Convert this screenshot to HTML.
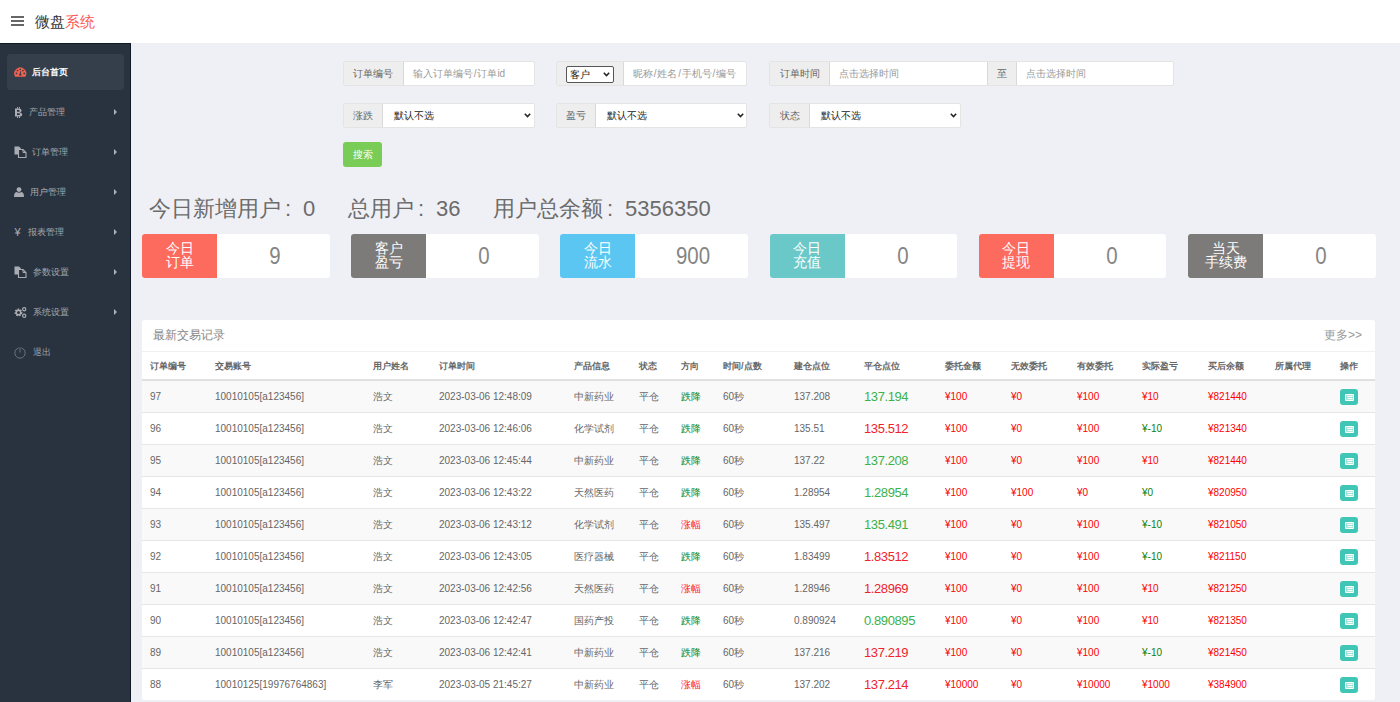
<!DOCTYPE html>
<html><head><meta charset="utf-8">
<style>
*{box-sizing:border-box;margin:0;padding:0}
html,body{width:1400px;height:702px;overflow:hidden}
body{font-family:"Liberation Sans",sans-serif;background:#eff0f5;position:relative;color:#666}
.hdr{position:absolute;left:0;top:0;width:1400px;height:43px;background:#fff}
.ham{position:absolute;left:11px;top:16px;width:12px;height:10px}
.ham i{position:absolute;left:0;width:12.5px;height:2px;background:#666}
.title{position:absolute;left:35px;top:11.5px;font-size:15px;line-height:20px;color:#333;white-space:nowrap}
.title span{color:#fb5858}
.side{position:absolute;left:0;top:43px;width:131px;height:659px;background:#29333f;border-top:1px solid #111a27;border-right:1px solid #111a27}
.si{position:absolute;left:7px;width:117px;height:36px;border-radius:3px}
.si.act{background:#353f4b}
.st{position:absolute;line-height:36px;font-size:9px;color:#a3a8ae;white-space:nowrap}
.st.w{color:#fff;font-weight:bold}
.ar{position:absolute;left:114px;width:0;height:0;border-left:3px solid #aeb2b7;border-top:3px solid transparent;border-bottom:3px solid transparent}
svg.ic{position:absolute}
.nav.act{background:#353f4b}
.nav .t{position:absolute;top:0;line-height:36px;font-size:9px;color:#a3a8ae;white-space:nowrap}
.nav.act .t{color:#fff}
.nav .ar{position:absolute;left:107px;top:15px;width:0;height:0;border-left:3px solid #aeb2b7;border-top:3px solid transparent;border-bottom:3px solid transparent}
.nav svg{position:absolute}
.main{position:absolute;left:131px;top:43px;width:1269px;height:659px}
.ig{position:absolute;height:25px;background:#fff;border:1px solid #e4e4e4;border-radius:2px;overflow:hidden}
.ig .ad{position:absolute;left:0;top:0;bottom:0;background:#eee;border-right:1px solid #d9d9d9;color:#666;font-size:10px;line-height:23px;text-align:center;white-space:nowrap}
.ig .ph{position:absolute;top:0;line-height:23px;font-size:10px;color:#9a9a9a;white-space:nowrap}
.ig .sv{position:absolute;top:0;line-height:24px;font-size:10px;color:#222;white-space:nowrap}
.chev{position:absolute;top:9px;width:7px;height:5px}
.sl{font-style:normal;padding:0 0.8px}
.isel{position:absolute;border:1px solid #555;border-radius:2px;background:#fff;font-size:10px;line-height:15px;padding-left:3px;color:#111}
.stath span{position:absolute;top:194px;font-size:22px;line-height:30px;color:#6b6b6b;white-space:nowrap}
.co{font-style:normal;display:inline-block;width:22px;padding-left:4px}
.card{position:absolute;top:234px;width:187.5px;height:44px;background:#fff;border-radius:3px;overflow:hidden}
.cl{position:absolute;left:0;top:0;width:75px;height:44px;color:#fff;font-size:13.5px;line-height:14px;text-align:center;padding-top:8px}
.cv{position:absolute;left:77px;top:0;width:112px;height:44px;text-align:center;font-size:23.5px;line-height:44px;color:#858585;transform:scaleX(0.87)}
.panel{position:absolute;left:142px;top:320px;width:1233px;height:380px;background:#fff;border-radius:3px}
.ptitle{position:absolute;left:153px;top:326px;font-size:12px;line-height:18px;color:#888;white-space:nowrap}
.pmore{position:absolute;left:1324px;top:326px;font-size:12px;line-height:18px;color:#999;white-space:nowrap}
.tdiv{position:absolute;left:142px;top:351px;width:1233px;height:1px;background:#eef0f3}
.th{position:absolute;top:358px;font-size:9.3px;line-height:16px;font-weight:bold;color:#666;white-space:nowrap}
.thb{position:absolute;left:142px;top:379px;width:1233px;height:2px;background:#e0e0e0}
.tr{position:absolute;left:142px;width:1233px;height:32px;border-bottom:1px solid #e6e6e6;background:#fff}
.tr.s{background:#f9f9f9}
.tr.last{height:31px;border-bottom:none;border-radius:0 0 3px 3px}
.td{position:absolute;top:0;line-height:31px;font-size:10px;color:#666;white-space:nowrap}
.dg{color:#0d820d}.ur{color:#ff2020}.rd{color:#f00}
.big{font-size:13px;letter-spacing:-0.4px}.bg{color:#3db14b}.br{color:#f0232c}
.op{position:absolute;left:0;top:8px;width:18px;height:16px;background:#3fc6b6;border-radius:3px}
.op svg{position:absolute;left:4.5px;top:4.5px}
.btn{position:absolute;left:343px;top:142px;width:39px;height:25px;background:#79cc55;border-radius:3px;color:#fff;font-size:10px;line-height:25px;text-align:center}
</style></head><body>
<div class="hdr">
  <div class="ham"><i style="top:0"></i><i style="top:4px"></i><i style="top:8px"></i></div>
  <div class="title">微盘<span>系统</span></div>
</div>
<div class="side"></div>
<div class="si act" style="top:54px"></div>
<svg class="ic" style="left:14px;top:67px" width="13" height="11" viewBox="0 0 13 11"><path d="M1.21 9.75 A6 6 0 1 1 11.29 9.75 Z" fill="#f0604f"/><g fill="#353f4b"><circle cx="6.25" cy="2.3" r="0.85"/><circle cx="3.5" cy="3.5" r="0.85"/><circle cx="9" cy="3.5" r="0.85"/><circle cx="2.5" cy="6.4" r="0.85"/><circle cx="10.25" cy="6.4" r="0.85"/><circle cx="6.25" cy="7.6" r="1.2"/></g><path d="M6.25 7.6 L6.7 4.2" stroke="#353f4b" stroke-width="0.9"/></svg>
<div class="st w" style="left:32px;top:54px">后台首页</div>
<div class="si" style="top:94px"></div>
<svg class="ic" style="left:14px;top:107px" width="9" height="11" viewBox="0 0 9 11"><path d="M1 1.5 H5 Q7.6 1.5 7.6 3.6 Q7.6 5.2 5.6 5.4 Q8.2 5.6 8.2 7.4 Q8.2 9.5 5.4 9.5 H1 Z M3 3 V4.8 H4.8 Q5.6 4.8 5.6 3.9 Q5.6 3 4.8 3 Z M3 6.2 V8 H5 Q6 8 6 7.1 Q6 6.2 5 6.2 Z" fill="#a9adb3" fill-rule="evenodd"/><rect x="3" y="0" width="1" height="1.6" fill="#a9adb3"/><rect x="5" y="0" width="1" height="1.6" fill="#a9adb3"/><rect x="3" y="9.4" width="1" height="1.6" fill="#a9adb3"/><rect x="5" y="9.4" width="1" height="1.6" fill="#a9adb3"/></svg>
<div class="st" style="left:29px;top:94px">产品管理</div>
<div class="ar" style="top:109px"></div>
<div class="si" style="top:134px"></div>
<svg class="ic" style="left:14px;top:146px" width="13" height="12" viewBox="0 0 13 12"><path d="M0.5 0.5 H5 L7 2.5 V8.5 H0.5 Z" fill="#a9adb3"/><path d="M4.5 3.5 H9 L12 6.5 V11.5 H4.5 Z" fill="#29333f" stroke="#a9adb3" stroke-width="1.1"/><path d="M9 3.5 V6.5 H12" fill="none" stroke="#a9adb3" stroke-width="1"/></svg>
<div class="st" style="left:32px;top:134px">订单管理</div>
<div class="ar" style="top:149px"></div>
<div class="si" style="top:174px"></div>
<svg class="ic" style="left:14px;top:187px" width="10" height="10" viewBox="0 0 10 10"><circle cx="5" cy="2.6" r="2.4" fill="#a9adb3"/><path d="M0 10 Q0 5.2 2.6 5 Q5 6.4 7.4 5 Q10 5.2 10 10 Z" fill="#a9adb3"/></svg>
<div class="st" style="left:30px;top:174px">用户管理</div>
<div class="ar" style="top:189px"></div>
<div class="si" style="top:214px"></div>
<div style="position:absolute;left:14.5px;top:226px;font-size:11px;line-height:12px;color:#a9adb3">¥</div>
<div class="st" style="left:28px;top:214px">报表管理</div>
<div class="ar" style="top:229px"></div>
<div class="si" style="top:254px"></div>
<svg class="ic" style="left:14px;top:266px" width="13" height="12" viewBox="0 0 13 12"><path d="M0.5 0.5 H5 L7 2.5 V8.5 H0.5 Z" fill="#a9adb3"/><path d="M4.5 3.5 H9 L12 6.5 V11.5 H4.5 Z" fill="#29333f" stroke="#a9adb3" stroke-width="1.1"/><path d="M9 3.5 V6.5 H12" fill="none" stroke="#a9adb3" stroke-width="1"/></svg>
<div class="st" style="left:33px;top:254px">参数设置</div>
<div class="ar" style="top:269px"></div>
<div class="si" style="top:294px"></div>
<svg class="ic" style="left:14px;top:307px" width="13" height="11" viewBox="0 0 13 11"><circle cx="4.5" cy="5.5" r="2.8" fill="none" stroke="#a9adb3" stroke-width="2.2" stroke-dasharray="1.5 0.9"/><circle cx="4.5" cy="5.5" r="2.2" fill="none" stroke="#a9adb3" stroke-width="1.4"/><circle cx="10.2" cy="2.2" r="1.6" fill="none" stroke="#a9adb3" stroke-width="1.2"/><circle cx="10.2" cy="8.8" r="1.6" fill="none" stroke="#a9adb3" stroke-width="1.2"/></svg>
<div class="st" style="left:33px;top:294px">系统设置</div>
<div class="ar" style="top:309px"></div>
<div class="si" style="top:334px"></div>
<svg class="ic" style="left:14px;top:347px" width="12" height="12" viewBox="0 0 12 12"><path d="M4.7 0.95 A5.2 5.2 0 1 0 7.3 0.95" fill="none" stroke="#7c848c" stroke-width="0.8"/><path d="M6 0.3 V5.6" stroke="#7c848c" stroke-width="0.8"/></svg>
<div class="st" style="left:33px;top:334px">退出</div>

<div class="ig" style="left:343px;top:61px;width:192px">
 <div class="ad" style="width:60px;padding-right:2px">订单编号</div>
 <div class="ph" style="left:69px">输入订单编号<i class="sl">/</i>订单id</div>
</div>
<div class="ig" style="left:556px;top:61px;width:191px">
 <div class="ad" style="width:67px"></div>
 <div class="ph" style="left:76px">昵称<i class="sl">/</i>姓名<i class="sl">/</i>手机号<i class="sl">/</i>编号</div>
</div>
<div class="isel" style="left:566px;top:66px;width:48px;height:17px">客户</div>
<svg class="chev" style="left:603px;top:72px" width="7" height="5" viewBox="0 0 7 5"><path d="M0.8 0.8 L3.5 3.6 L6.2 0.8" fill="none" stroke="#222" stroke-width="1.5"/></svg>
<div class="ig" style="left:769px;top:61px;width:405px">
 <div class="ad" style="width:60px">订单时间</div>
 <div class="ph" style="left:69px">点击选择时间</div>
 <div class="ad" style="left:217px;width:30px;border-left:1px solid #d9d9d9">至</div>
 <div class="ph" style="left:256px">点击选择时间</div>
</div>
<div class="ig" style="left:343px;top:103px;width:192px">
 <div class="ad" style="width:39px">涨跌</div>
 <div class="sv" style="left:50px">默认不选</div>
</div>
<svg class="chev" style="left:524px;top:113px" width="7" height="5" viewBox="0 0 7 5"><path d="M0.8 0.8 L3.5 3.6 L6.2 0.8" fill="none" stroke="#222" stroke-width="1.5"/></svg>
<div class="ig" style="left:556px;top:103px;width:191px">
 <div class="ad" style="width:39px;padding-right:1px">盈亏</div>
 <div class="sv" style="left:50px">默认不选</div>
</div>
<svg class="chev" style="left:737px;top:113px" width="7" height="5" viewBox="0 0 7 5"><path d="M0.8 0.8 L3.5 3.6 L6.2 0.8" fill="none" stroke="#222" stroke-width="1.5"/></svg>
<div class="ig" style="left:769px;top:103px;width:192px">
 <div class="ad" style="width:40px">状态</div>
 <div class="sv" style="left:51px">默认不选</div>
</div>
<svg class="chev" style="left:950px;top:113px" width="7" height="5" viewBox="0 0 7 5"><path d="M0.8 0.8 L3.5 3.6 L6.2 0.8" fill="none" stroke="#222" stroke-width="1.5"/></svg>
<div class="btn">搜索</div>
<div class="stath"><span style="left:149px">今日新增用户<i class="co">:</i>0</span><span style="left:348px">总用户<i class="co">:</i>36</span><span style="left:493px">用户总余额<i class="co">:</i>5356350</span></div>
<div class="card" style="left:142.0px"><div class="cl" style="background:#fd6a5e">今日<br>订单</div><div class="cv">9</div></div>
<div class="card" style="left:351.2px"><div class="cl" style="background:#7d7b7a">客户<br>盈亏</div><div class="cv">0</div></div>
<div class="card" style="left:560.4px"><div class="cl" style="background:#5bc6f2">今日<br>流水</div><div class="cv">900</div></div>
<div class="card" style="left:769.6px"><div class="cl" style="background:#6ac9c8">今日<br>充值</div><div class="cv">0</div></div>
<div class="card" style="left:978.8px"><div class="cl" style="background:#fd6a5e">今日<br>提现</div><div class="cv">0</div></div>
<div class="card" style="left:1188.0px"><div class="cl" style="background:#7d7b7a">当天<br>手续费</div><div class="cv">0</div></div>

<div class="panel"></div>
<div class="ptitle">最新交易记录</div>
<div class="pmore">更多&gt;&gt;</div>
<div class="tdiv"></div>
<div class="th" style="left:150px">订单编号</div>
<div class="th" style="left:215px">交易账号</div>
<div class="th" style="left:373px">用户姓名</div>
<div class="th" style="left:439px">订单时间</div>
<div class="th" style="left:574px">产品信息</div>
<div class="th" style="left:639px">状态</div>
<div class="th" style="left:681px">方向</div>
<div class="th" style="left:723px">时间/点数</div>
<div class="th" style="left:794px">建仓点位</div>
<div class="th" style="left:864px">平仓点位</div>
<div class="th" style="left:945px">委托金额</div>
<div class="th" style="left:1011px">无效委托</div>
<div class="th" style="left:1077px">有效委托</div>
<div class="th" style="left:1142px">实际盈亏</div>
<div class="th" style="left:1208px">买后余额</div>
<div class="th" style="left:1275px">所属代理</div>
<div class="th" style="left:1340px">操作</div>
<div class="thb"></div>
<div class="tr s" style="top:381px">
 <div class="td" style="left:8px">97</div>
 <div class="td" style="left:73px">10010105[a123456]</div>
 <div class="td" style="left:231px">浩文</div>
 <div class="td" style="left:297px">2023-03-06 12:48:09</div>
 <div class="td" style="left:432px">中新药业</div>
 <div class="td" style="left:497px">平仓</div>
 <div class="td" style="left:539px"><span class="dg">跌降</span></div>
 <div class="td" style="left:581px">60秒</div>
 <div class="td" style="left:652px">137.208</div>
 <div class="td" style="left:722px"><span class="big bg">137.194</span></div>
 <div class="td" style="left:803px"><span class="rd">¥100</span></div>
 <div class="td" style="left:869px"><span class="rd">¥0</span></div>
 <div class="td" style="left:935px"><span class="rd">¥100</span></div>
 <div class="td" style="left:1000px"><span class="rd">¥10</span></div>
 <div class="td" style="left:1066px"><span class="rd">¥821440</span></div>
 <div class="td" style="left:1198px"><div class="op"><svg width="9" height="7" viewBox="0 0 9 7"><rect x="0" y="0" width="9" height="7" rx="1" fill="#fff"/><rect x="1" y="1.2" width="7" height="4.6" fill="#9fe0d8"/><rect x="2.5" y="2" width="5" height="1" fill="#fff"/><rect x="2.5" y="4" width="5" height="1" fill="#fff"/></svg></div></div>
</div>
<div class="tr" style="top:413px">
 <div class="td" style="left:8px">96</div>
 <div class="td" style="left:73px">10010105[a123456]</div>
 <div class="td" style="left:231px">浩文</div>
 <div class="td" style="left:297px">2023-03-06 12:46:06</div>
 <div class="td" style="left:432px">化学试剂</div>
 <div class="td" style="left:497px">平仓</div>
 <div class="td" style="left:539px"><span class="dg">跌降</span></div>
 <div class="td" style="left:581px">60秒</div>
 <div class="td" style="left:652px">135.51</div>
 <div class="td" style="left:722px"><span class="big br">135.512</span></div>
 <div class="td" style="left:803px"><span class="rd">¥100</span></div>
 <div class="td" style="left:869px"><span class="rd">¥0</span></div>
 <div class="td" style="left:935px"><span class="rd">¥100</span></div>
 <div class="td" style="left:1000px"><span class="dg">¥-10</span></div>
 <div class="td" style="left:1066px"><span class="rd">¥821340</span></div>
 <div class="td" style="left:1198px"><div class="op"><svg width="9" height="7" viewBox="0 0 9 7"><rect x="0" y="0" width="9" height="7" rx="1" fill="#fff"/><rect x="1" y="1.2" width="7" height="4.6" fill="#9fe0d8"/><rect x="2.5" y="2" width="5" height="1" fill="#fff"/><rect x="2.5" y="4" width="5" height="1" fill="#fff"/></svg></div></div>
</div>
<div class="tr s" style="top:445px">
 <div class="td" style="left:8px">95</div>
 <div class="td" style="left:73px">10010105[a123456]</div>
 <div class="td" style="left:231px">浩文</div>
 <div class="td" style="left:297px">2023-03-06 12:45:44</div>
 <div class="td" style="left:432px">中新药业</div>
 <div class="td" style="left:497px">平仓</div>
 <div class="td" style="left:539px"><span class="dg">跌降</span></div>
 <div class="td" style="left:581px">60秒</div>
 <div class="td" style="left:652px">137.22</div>
 <div class="td" style="left:722px"><span class="big bg">137.208</span></div>
 <div class="td" style="left:803px"><span class="rd">¥100</span></div>
 <div class="td" style="left:869px"><span class="rd">¥0</span></div>
 <div class="td" style="left:935px"><span class="rd">¥100</span></div>
 <div class="td" style="left:1000px"><span class="rd">¥10</span></div>
 <div class="td" style="left:1066px"><span class="rd">¥821440</span></div>
 <div class="td" style="left:1198px"><div class="op"><svg width="9" height="7" viewBox="0 0 9 7"><rect x="0" y="0" width="9" height="7" rx="1" fill="#fff"/><rect x="1" y="1.2" width="7" height="4.6" fill="#9fe0d8"/><rect x="2.5" y="2" width="5" height="1" fill="#fff"/><rect x="2.5" y="4" width="5" height="1" fill="#fff"/></svg></div></div>
</div>
<div class="tr" style="top:477px">
 <div class="td" style="left:8px">94</div>
 <div class="td" style="left:73px">10010105[a123456]</div>
 <div class="td" style="left:231px">浩文</div>
 <div class="td" style="left:297px">2023-03-06 12:43:22</div>
 <div class="td" style="left:432px">天然医药</div>
 <div class="td" style="left:497px">平仓</div>
 <div class="td" style="left:539px"><span class="dg">跌降</span></div>
 <div class="td" style="left:581px">60秒</div>
 <div class="td" style="left:652px">1.28954</div>
 <div class="td" style="left:722px"><span class="big bg">1.28954</span></div>
 <div class="td" style="left:803px"><span class="rd">¥100</span></div>
 <div class="td" style="left:869px"><span class="rd">¥100</span></div>
 <div class="td" style="left:935px"><span class="rd">¥0</span></div>
 <div class="td" style="left:1000px"><span class="dg">¥0</span></div>
 <div class="td" style="left:1066px"><span class="rd">¥820950</span></div>
 <div class="td" style="left:1198px"><div class="op"><svg width="9" height="7" viewBox="0 0 9 7"><rect x="0" y="0" width="9" height="7" rx="1" fill="#fff"/><rect x="1" y="1.2" width="7" height="4.6" fill="#9fe0d8"/><rect x="2.5" y="2" width="5" height="1" fill="#fff"/><rect x="2.5" y="4" width="5" height="1" fill="#fff"/></svg></div></div>
</div>
<div class="tr s" style="top:509px">
 <div class="td" style="left:8px">93</div>
 <div class="td" style="left:73px">10010105[a123456]</div>
 <div class="td" style="left:231px">浩文</div>
 <div class="td" style="left:297px">2023-03-06 12:43:12</div>
 <div class="td" style="left:432px">化学试剂</div>
 <div class="td" style="left:497px">平仓</div>
 <div class="td" style="left:539px"><span class="ur">涨幅</span></div>
 <div class="td" style="left:581px">60秒</div>
 <div class="td" style="left:652px">135.497</div>
 <div class="td" style="left:722px"><span class="big bg">135.491</span></div>
 <div class="td" style="left:803px"><span class="rd">¥100</span></div>
 <div class="td" style="left:869px"><span class="rd">¥0</span></div>
 <div class="td" style="left:935px"><span class="rd">¥100</span></div>
 <div class="td" style="left:1000px"><span class="dg">¥-10</span></div>
 <div class="td" style="left:1066px"><span class="rd">¥821050</span></div>
 <div class="td" style="left:1198px"><div class="op"><svg width="9" height="7" viewBox="0 0 9 7"><rect x="0" y="0" width="9" height="7" rx="1" fill="#fff"/><rect x="1" y="1.2" width="7" height="4.6" fill="#9fe0d8"/><rect x="2.5" y="2" width="5" height="1" fill="#fff"/><rect x="2.5" y="4" width="5" height="1" fill="#fff"/></svg></div></div>
</div>
<div class="tr" style="top:541px">
 <div class="td" style="left:8px">92</div>
 <div class="td" style="left:73px">10010105[a123456]</div>
 <div class="td" style="left:231px">浩文</div>
 <div class="td" style="left:297px">2023-03-06 12:43:05</div>
 <div class="td" style="left:432px">医疗器械</div>
 <div class="td" style="left:497px">平仓</div>
 <div class="td" style="left:539px"><span class="dg">跌降</span></div>
 <div class="td" style="left:581px">60秒</div>
 <div class="td" style="left:652px">1.83499</div>
 <div class="td" style="left:722px"><span class="big br">1.83512</span></div>
 <div class="td" style="left:803px"><span class="rd">¥100</span></div>
 <div class="td" style="left:869px"><span class="rd">¥0</span></div>
 <div class="td" style="left:935px"><span class="rd">¥100</span></div>
 <div class="td" style="left:1000px"><span class="dg">¥-10</span></div>
 <div class="td" style="left:1066px"><span class="rd">¥821150</span></div>
 <div class="td" style="left:1198px"><div class="op"><svg width="9" height="7" viewBox="0 0 9 7"><rect x="0" y="0" width="9" height="7" rx="1" fill="#fff"/><rect x="1" y="1.2" width="7" height="4.6" fill="#9fe0d8"/><rect x="2.5" y="2" width="5" height="1" fill="#fff"/><rect x="2.5" y="4" width="5" height="1" fill="#fff"/></svg></div></div>
</div>
<div class="tr s" style="top:573px">
 <div class="td" style="left:8px">91</div>
 <div class="td" style="left:73px">10010105[a123456]</div>
 <div class="td" style="left:231px">浩文</div>
 <div class="td" style="left:297px">2023-03-06 12:42:56</div>
 <div class="td" style="left:432px">天然医药</div>
 <div class="td" style="left:497px">平仓</div>
 <div class="td" style="left:539px"><span class="ur">涨幅</span></div>
 <div class="td" style="left:581px">60秒</div>
 <div class="td" style="left:652px">1.28946</div>
 <div class="td" style="left:722px"><span class="big br">1.28969</span></div>
 <div class="td" style="left:803px"><span class="rd">¥100</span></div>
 <div class="td" style="left:869px"><span class="rd">¥0</span></div>
 <div class="td" style="left:935px"><span class="rd">¥100</span></div>
 <div class="td" style="left:1000px"><span class="rd">¥10</span></div>
 <div class="td" style="left:1066px"><span class="rd">¥821250</span></div>
 <div class="td" style="left:1198px"><div class="op"><svg width="9" height="7" viewBox="0 0 9 7"><rect x="0" y="0" width="9" height="7" rx="1" fill="#fff"/><rect x="1" y="1.2" width="7" height="4.6" fill="#9fe0d8"/><rect x="2.5" y="2" width="5" height="1" fill="#fff"/><rect x="2.5" y="4" width="5" height="1" fill="#fff"/></svg></div></div>
</div>
<div class="tr" style="top:605px">
 <div class="td" style="left:8px">90</div>
 <div class="td" style="left:73px">10010105[a123456]</div>
 <div class="td" style="left:231px">浩文</div>
 <div class="td" style="left:297px">2023-03-06 12:42:47</div>
 <div class="td" style="left:432px">国药产投</div>
 <div class="td" style="left:497px">平仓</div>
 <div class="td" style="left:539px"><span class="dg">跌降</span></div>
 <div class="td" style="left:581px">60秒</div>
 <div class="td" style="left:652px">0.890924</div>
 <div class="td" style="left:722px"><span class="big bg">0.890895</span></div>
 <div class="td" style="left:803px"><span class="rd">¥100</span></div>
 <div class="td" style="left:869px"><span class="rd">¥0</span></div>
 <div class="td" style="left:935px"><span class="rd">¥100</span></div>
 <div class="td" style="left:1000px"><span class="rd">¥10</span></div>
 <div class="td" style="left:1066px"><span class="rd">¥821350</span></div>
 <div class="td" style="left:1198px"><div class="op"><svg width="9" height="7" viewBox="0 0 9 7"><rect x="0" y="0" width="9" height="7" rx="1" fill="#fff"/><rect x="1" y="1.2" width="7" height="4.6" fill="#9fe0d8"/><rect x="2.5" y="2" width="5" height="1" fill="#fff"/><rect x="2.5" y="4" width="5" height="1" fill="#fff"/></svg></div></div>
</div>
<div class="tr s" style="top:637px">
 <div class="td" style="left:8px">89</div>
 <div class="td" style="left:73px">10010105[a123456]</div>
 <div class="td" style="left:231px">浩文</div>
 <div class="td" style="left:297px">2023-03-06 12:42:41</div>
 <div class="td" style="left:432px">中新药业</div>
 <div class="td" style="left:497px">平仓</div>
 <div class="td" style="left:539px"><span class="dg">跌降</span></div>
 <div class="td" style="left:581px">60秒</div>
 <div class="td" style="left:652px">137.216</div>
 <div class="td" style="left:722px"><span class="big br">137.219</span></div>
 <div class="td" style="left:803px"><span class="rd">¥100</span></div>
 <div class="td" style="left:869px"><span class="rd">¥0</span></div>
 <div class="td" style="left:935px"><span class="rd">¥100</span></div>
 <div class="td" style="left:1000px"><span class="dg">¥-10</span></div>
 <div class="td" style="left:1066px"><span class="rd">¥821450</span></div>
 <div class="td" style="left:1198px"><div class="op"><svg width="9" height="7" viewBox="0 0 9 7"><rect x="0" y="0" width="9" height="7" rx="1" fill="#fff"/><rect x="1" y="1.2" width="7" height="4.6" fill="#9fe0d8"/><rect x="2.5" y="2" width="5" height="1" fill="#fff"/><rect x="2.5" y="4" width="5" height="1" fill="#fff"/></svg></div></div>
</div>
<div class="tr last" style="top:669px">
 <div class="td" style="left:8px">88</div>
 <div class="td" style="left:73px">10010125[19976764863]</div>
 <div class="td" style="left:231px">李军</div>
 <div class="td" style="left:297px">2023-03-05 21:45:27</div>
 <div class="td" style="left:432px">中新药业</div>
 <div class="td" style="left:497px">平仓</div>
 <div class="td" style="left:539px"><span class="ur">涨幅</span></div>
 <div class="td" style="left:581px">60秒</div>
 <div class="td" style="left:652px">137.202</div>
 <div class="td" style="left:722px"><span class="big br">137.214</span></div>
 <div class="td" style="left:803px"><span class="rd">¥10000</span></div>
 <div class="td" style="left:869px"><span class="rd">¥0</span></div>
 <div class="td" style="left:935px"><span class="rd">¥10000</span></div>
 <div class="td" style="left:1000px"><span class="rd">¥1000</span></div>
 <div class="td" style="left:1066px"><span class="rd">¥384900</span></div>
 <div class="td" style="left:1198px"><div class="op"><svg width="9" height="7" viewBox="0 0 9 7"><rect x="0" y="0" width="9" height="7" rx="1" fill="#fff"/><rect x="1" y="1.2" width="7" height="4.6" fill="#9fe0d8"/><rect x="2.5" y="2" width="5" height="1" fill="#fff"/><rect x="2.5" y="4" width="5" height="1" fill="#fff"/></svg></div></div>
</div>
</body></html>
